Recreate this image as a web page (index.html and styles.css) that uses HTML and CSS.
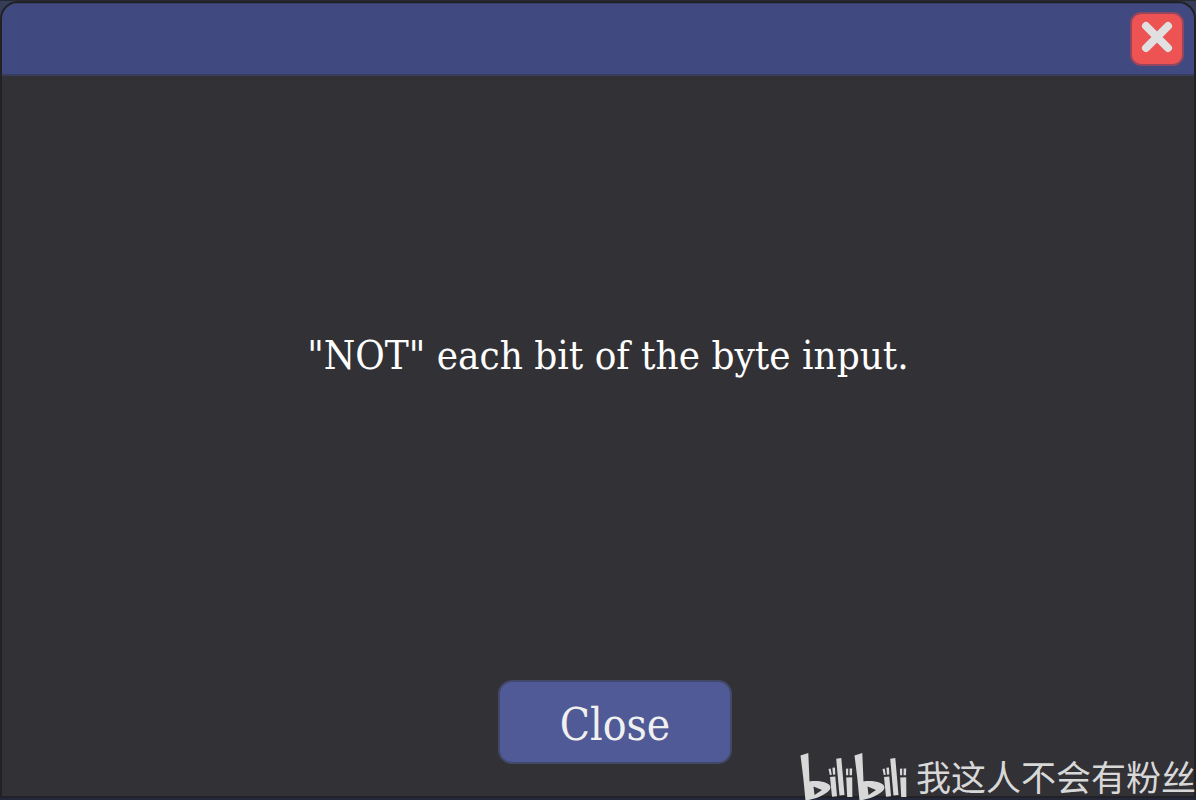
FILE: index.html
```html
<!DOCTYPE html>
<html lang="en">
<head>
<meta charset="utf-8">
<title>Level hint</title>
<link rel="stylesheet" href="styles.css">
</head>
<body>
<main class="dialog">
  <header class="titlebar">
    <button class="dismiss" type="button" aria-label="Close window">
      <svg class="cross" viewBox="0 0 32 32" aria-hidden="true"><path d="M5 5L27 27M27 5L5 27"/></svg>
    </button>
  </header>
  <p class="message">"NOT" each bit of the byte input.</p>
  <footer class="actions">
    <button class="close" type="button">Close</button>
  </footer>
</main>
<div class="watermark" lang="zh">
  <svg class="logo" viewBox="0 0 108 48" role="img" aria-label="bilibili">
    <g id="half">
      <path fill-rule="evenodd" d="M0.5 3.5L8.3 1L9.5 29.5C20 28 30.5 31 30.5 35.5C30 41 17 47 5.5 48.5L3.3 26ZM13.5 34.5L14.5 43L22 38Z"/>
      <path d="M28.5 17L30.6 16.5L31.8 22.8L29.8 23ZM32.4 15.7L35 15.5L35.3 22.5L33 22.7ZM30 25L35.3 24.5L37 44.3L32 44.8ZM36.2 6.7L41.3 6L44.5 43L39.5 43.6ZM45.9 16.8L48.2 16.6L48.2 23.2L46.1 23.3ZM49.6 16.4L52.2 16.4L52 23.2L49.6 23.2ZM46.2 25.4L52.2 25.2L52.4 45L47.2 45Z"/>
    </g>
    <use href="#half" x="54"/>
  </svg>
  <span>我这人不会有粉丝</span>
</div>
</body>
</html>
```
FILE: styles.css
```css
* { box-sizing: border-box; }
body {
  margin: 0;
  min-height: 100vh;
  display: flex;
  background: #363d58;
  border-top: 1px solid #272a35;
  border-bottom: 2px solid #25283a;
  font-family: "Roboto Slab", "DejaVu Serif Condensed", "DejaVu Serif", serif;
  overflow: hidden;
}
.dialog {
  flex: 1;
  display: flex;
  flex-direction: column;
  background: #323136;
  border: 2px solid #222226;
  border-radius: 18px 18px 0 0;
  overflow: hidden;
}
.titlebar {
  display: flex;
  justify-content: flex-end;
  padding: 8px 10px;
  background: #404a80;
  border-top: 1px solid #353d62;
  border-bottom: 2px solid #383d5c;
}
.dismiss {
  width: 54px;
  height: 54px;
  padding: 0 0 4px;
  display: grid;
  place-items: center;
  background: #ed5353;
  border: 2px solid #93465f;
  border-radius: 11px;
}
.cross { width: 32px; height: 32px; }
.cross path { stroke: #e0e0e0; stroke-width: 8; stroke-linecap: round; }
.message {
  flex: 1;
  display: grid;
  place-items: center;
  margin: 0;
  padding: 0 0 46px 20px;
  color: #fff;
  font-size: 40px;
  line-height: 48px;
}
.actions {
  display: flex;
  justify-content: center;
  padding: 0 0 32px 34px;
}
.close {
  width: 234px;
  height: 84px;
  padding: 4px 0 0;
  background: #4f5a96;
  border: 2px solid #424869;
  border-radius: 14px;
  color: #f0f0f0;
  font-family: inherit;
  font-size: 44px;
}
.watermark {
  position: absolute;
  right: 0;
  bottom: 0;
  display: flex;
  align-items: center;
  gap: 8px;
  color: #d8d8d8;
  font: 400 35px/46px "Noto Sans CJK SC", sans-serif;
  white-space: nowrap;
}
.logo { width: 108px; height: 48px; fill: #d8d8d8; }
```
